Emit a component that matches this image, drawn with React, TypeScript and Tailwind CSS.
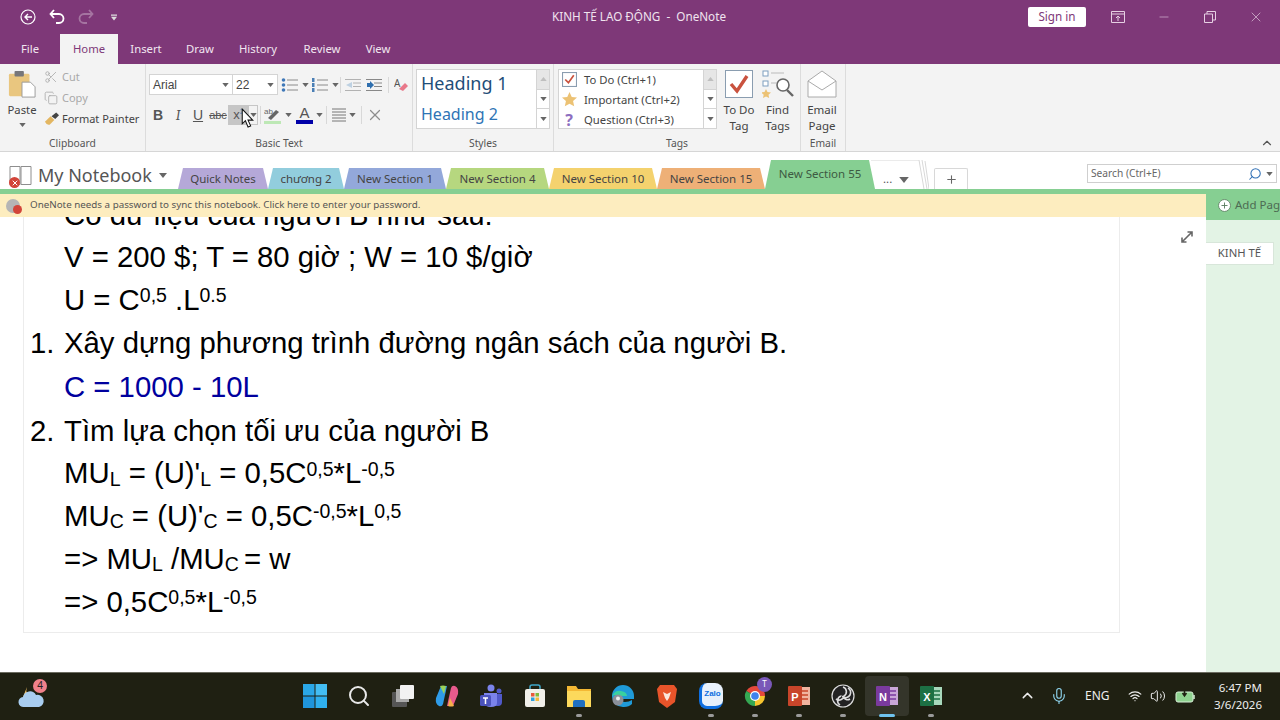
import { ChevronUp, Copy, Scissors, Search, Mic, Wifi, Volume2, X, Minus, Plus } from 'lucide-react';
import type { ReactNode } from 'react';

const sections = [
  { name: 'Quick Notes', w: 'w-[90px]', bg: 'bg-[#b5a8d8]' },
  { name: 'chương 2', w: 'w-[76px]', bg: 'bg-[#92cddd]' },
  { name: 'New Section 1', w: 'w-[102px]', bg: 'bg-[#93a8da]' },
  { name: 'New Section 4', w: 'w-[103px]', bg: 'bg-[#b6d77f]' },
  { name: 'New Section 10', w: 'w-[108px]', bg: 'bg-[#f4d26e]' },
  { name: 'New Section 15', w: 'w-[108px]', bg: 'bg-[#eeb077]' },
];

function Caret({ className = '' }: { className?: string }) {
  return (
    <svg viewBox="0 0 8 5" className={`w-[7px] h-[4px] shrink-0 ${className}`}>
      <path d="M0 0h8L4 5z" fill="#666" />
    </svg>
  );
}

function Group({ label, w, children }: { label: string; w: string; children: ReactNode }) {
  return (
    <div className={`${w} shrink-0 h-full flex flex-col border-r border-[#dcdcdc]`}>
      <div className="flex-1 min-h-0">{children}</div>
      <div className="h-[16px] pt-[2px] flex items-center justify-center text-[10.3px] text-[#555]">{label}</div>
    </div>
  );
}

function ScrollButtons() {
  return (
    <div className="w-[13px] h-[60px] flex flex-col border border-l-0 border-[#d4d4d4] bg-white">
      <div className="flex-1 bg-[#e6e6e6] flex items-center justify-center"><Caret className="rotate-180 opacity-30" /></div>
      <div className="flex-1 border-y border-[#d4d4d4] flex items-center justify-center"><Caret /></div>
      <div className="flex-1 flex items-center justify-center"><Caret /></div>
    </div>
  );
}

function ListIcon({ numbered = false }: { numbered?: boolean }) {
  return (
    <svg viewBox="0 0 18 16" className="w-[18px] h-[16px]">
      {[3, 8, 13].map((y) => (
        <g key={y}>
          {numbered ? (
            <rect x="1" y={y - 2} width="2.5" height="4" fill="#4a7fb5" />
          ) : (
            <circle cx="2.5" cy={y} r="1.8" fill="#3f78b8" />
          )}
          <path d={`M6 ${y}h11`} stroke="#8a8a8a" strokeWidth="1" />
        </g>
      ))}
    </svg>
  );
}

function IndentIcon({ color, dim = false }: { color: string; dim?: boolean }) {
  return (
    <svg viewBox="0 0 16 14" className={`w-[16px] h-[14px] ${dim ? 'opacity-60' : ''}`}>
      <path d="M0 1.5h16M8 5h8M8 8.5h8M0 12.5h16" stroke="#888" strokeWidth="1" />
      <path d={dim ? 'M7 4v6L1 7z' : 'M1 5h3V3l4 4-4 4V9H1z'} fill={color} />
    </svg>
  );
}

function Clipboard() {
  return (
    <div className="flex h-full">
      <div className="w-[44px] pt-[5px] flex flex-col items-center">
        <svg viewBox="0 0 30 30" className="w-[28px] h-[30px]">
          <rect x="1" y="4" width="22" height="24" rx="1.5" fill="#e9c67f" />
          <rect x="7" y="1" width="10" height="6" rx="1" fill="#77777a" />
          <path d="M15 13h9l5 5v11H15z" fill="#fff" stroke="#9a9a9a" strokeWidth="1" />
        </svg>
        <span className="text-[11.3px] leading-[16px] mt-[3px] text-[#444]">Paste</span>
        <Caret className="mt-[5px]" />
      </div>
      <div className="flex flex-col pt-[2px] text-[11px] leading-[21px]">
        <div className="flex items-center gap-[4px] text-[#a9a9a9]"><Scissors size={14} strokeWidth={1.4} />Cut</div>
        <div className="flex items-center gap-[4px] text-[#a9a9a9]"><Copy size={14} strokeWidth={1.4} />Copy</div>
        <div className="flex items-center gap-[3px] text-[#444] whitespace-nowrap">
          <svg viewBox="0 0 16 14" className="w-[15px] h-[14px]">
            <path d="M1 10l6-6 4 4-5 5q-3 1-5-3z" fill="#e3b661" />
            <path d="M8 4l5-4 3 3-4 4z" fill="#444" />
          </svg>
          Format Painter
        </div>
      </div>
    </div>
  );
}

function BasicText() {
  return (
    <div className="pl-[3px] pt-[10px]">
      <div className="flex items-center h-[21px]">
        <div className="w-[84px] h-[21px] bg-white border border-[#d4d4d4] flex items-center justify-between px-[3px] text-[12px] text-[#444] [font-family:'Liberation_Sans',sans-serif]">
          Arial<Caret />
        </div>
        <div className="w-[45px] h-[21px] bg-white border border-l-0 border-[#d4d4d4] flex items-center justify-between pl-[3px] pr-[3px] text-[12px] text-[#444] [font-family:'Liberation_Sans',sans-serif]">
          22<Caret />
        </div>
        <div className="flex items-center ml-[3px] gap-[3px]"><ListIcon /><Caret /></div>
        <div className="flex items-center ml-[2px] gap-[3px]"><ListIcon numbered /><Caret /></div>
        <div className="w-px h-[16px] bg-[#d8d8d8] ml-[1px]" />
        <div className="flex items-center ml-[4px] gap-[5px]"><IndentIcon color="#9bbcd8" dim /><IndentIcon color="#2f6fae" /></div>
        <div className="w-px h-[16px] bg-[#d8d8d8] ml-[6px]" />
        <svg viewBox="0 0 14 14" className="w-[14px] h-[14px] ml-[5px]">
          <text x="0" y="9" fontSize="10" fill="#555">A</text>
          <path d="M5 11l6-6 3 3-5 5z" fill="#e8788a" />
        </svg>
      </div>
      <div className="flex items-center h-[22px] mt-[9px] -ml-px text-[#555] [font-family:'Liberation_Sans',sans-serif]">
        <span className="w-[20px] text-center text-[14px] font-bold">B</span>
        <span className="w-[20px] text-center text-[14px] italic font-serif">I</span>
        <span className="w-[20px] text-center text-[14px] underline">U</span>
        <span className="w-[20px] text-center text-[11px] line-through">abc</span>
        <div className="relative flex items-center">
          <div className="w-[21px] h-[20px] bg-[#c6c6c6] flex items-center justify-center text-[13px]">
            x<sup className="text-[7px] text-[#5b8bb8]">2</sup>
          </div>
          <div className="w-[9px] h-[20px] border border-l-0 border-[#c6c6c6] flex items-center justify-center"><Caret /></div>
          <svg viewBox="0 0 12 19" className="absolute left-[13px] top-[3px] w-[13px] h-[20px]">
            <path d="M1 1v14l3-3 2.5 6 2.5-1-2.5-5.5H11z" fill="#fff" stroke="#111" strokeWidth="1" />
          </svg>
        </div>
        <div className="w-px h-[18px] bg-[#d8d8d8] ml-[2px]" />
        <div className="flex items-center ml-[3px] gap-[3px]">
          <svg viewBox="0 0 18 18" className="w-[18px] h-[18px]">
            <text x="0" y="8" fontSize="8" fill="#666">ab</text>
            <path d="M4 12l8-8 3 2-8 8z" fill="#666" />
            <rect x="0" y="15" width="17" height="3" fill="#bde8b5" />
          </svg>
          <Caret />
        </div>
        <div className="flex items-center ml-[4px] gap-[3px]">
          <div className="w-[17px] flex flex-col items-center">
            <span className="text-[15px] leading-[14px] text-[#555]">A</span>
            <div className="w-[17px] h-[4px] bg-[#0000a8]" />
          </div>
          <Caret />
        </div>
        <div className="w-px h-[18px] bg-[#d8d8d8] ml-[3px]" />
        <div className="flex items-center ml-[5px] gap-[3px]">
          <svg viewBox="0 0 14 14" className="w-[14px] h-[14px]">
            <path d="M0 1h14M0 4h14M0 7h14M0 10h14M0 13h14" stroke="#777" strokeWidth="1" />
          </svg>
          <Caret />
        </div>
        <div className="w-px h-[18px] bg-[#d8d8d8] ml-[5px]" />
        <X size={18} strokeWidth={1.6} className="ml-[4px] text-[#8d8d8d]" />
      </div>
    </div>
  );
}

function Styles() {
  return (
    <div className="flex pt-[5px] pl-[3px]">
      <div className="w-[121px] h-[60px] bg-white border border-[#d4d4d4] pl-[4px] flex flex-col">
        <span className="text-[18px] leading-[27px] text-[#1f4e79]">Heading 1</span>
        <span className="text-[16px] leading-[34px] text-[#2e74b5]">Heading 2</span>
      </div>
      <ScrollButtons />
    </div>
  );
}

function Tags() {
  return (
    <div className="flex pt-[5px] pl-[4px]">
      <div className="w-[146px] h-[60px] pt-px bg-white border border-[#d4d4d4] flex flex-col justify-center text-[11.3px] leading-[20px] text-[#444]">
        <div className="flex items-center">
          <div className="w-[25px] pr-[5px] flex justify-center">
            <svg viewBox="0 0 14 14" className="w-[15px] h-[15px]">
              <rect x="0.5" y="0.5" width="13" height="13" fill="#fff" stroke="#8a9db0" />
              <path d="M3 7l3 3 5-7" stroke="#c9523e" strokeWidth="1.6" fill="none" />
            </svg>
          </div>
          To Do (Ctrl+1)
        </div>
        <div className="flex items-center">
          <div className="w-[25px] pr-[5px] flex justify-center">
            <svg viewBox="0 0 16 16" className="w-[15px] h-[15px]">
              <path d="M8 0l2.4 5.2 5.6.6-4.2 3.8 1.2 5.6L8 12.4 3 15.2l1.2-5.6L0 5.8l5.6-.6z" fill="#ecc274" />
            </svg>
          </div>
          Important (Ctrl+2)
        </div>
        <div className="flex items-center">
          <span className="w-[25px] pr-[5px] text-center text-[16px] font-bold text-[#8d6fc0]">?</span>
          Question (Ctrl+3)
        </div>
      </div>
      <ScrollButtons />
      <div className="w-[44px] pt-px flex flex-col items-center text-[11.5px] leading-[16px] text-[#444] text-center">
        <svg viewBox="0 0 28 28" className="w-[28px] h-[28px] mb-[4px]">
          <rect x="0.5" y="0.5" width="27" height="27" fill="#fff" stroke="#8a9db0" />
          <path d="M6 14l6 7 10-15" stroke="#c9523e" strokeWidth="3.4" fill="none" />
        </svg>
        To Do<br />Tag
      </div>
      <div className="w-[33px] pt-px flex flex-col items-center text-[11.5px] leading-[16px] text-[#444] text-center">
        <svg viewBox="0 0 32 28" className="w-[32px] h-[28px] mb-[4px] shrink-0">
          <rect x="1" y="1" width="5" height="5" fill="#fff" stroke="#7f9fc0" />
          <rect x="1" y="11" width="5" height="5" fill="#fff" stroke="#7f9fc0" />
          <path d="M9 3h13M9 13h6" stroke="#bbb" />
          <path d="M4 19l1.5 3 3.5.4-2.5 2.3.7 3.3L4 26.4 1 28l.7-3.3L-1 22.4l3.5-.4z" fill="#ecc274" />
          <circle cx="21" cy="15" r="6" fill="#fff" stroke="#666" strokeWidth="1.6" />
          <path d="M25 20l6 6" stroke="#666" strokeWidth="2.4" />
        </svg>
        Find<br />Tags
      </div>
    </div>
  );
}

function Email() {
  return (
    <div className="pt-[6px] pr-[2px] flex flex-col items-center text-[11.5px] leading-[16px] text-[#444] text-center">
      <svg viewBox="0 0 30 28" className="w-[30px] h-[28px] mb-[4px]">
        <path d="M1 11L15 1l14 10v16H1z" fill="#fff" stroke="#aaa" />
        <path d="M1 11l14 9 14-9" fill="none" stroke="#aaa" />
      </svg>
      Email<br />Page
    </div>
  );
}

function Ribbon() {
  return (
    <div className="h-[88px] shrink-0 bg-[#f3f3f3] border-b border-[#d6d6d6] flex">
      <Group label="Clipboard" w="w-[146px]"><Clipboard /></Group>
      <Group label="Basic Text" w="w-[267px]"><BasicText /></Group>
      <Group label="Styles" w="w-[141px]"><Styles /></Group>
      <Group label="Tags" w="w-[247px]"><Tags /></Group>
      <Group label="Email" w="w-[45px]"><Email /></Group>
      <div className="flex-1 flex items-end justify-end pr-[6px] pb-px">
        <ChevronUp size={14} className="text-[#555]" />
      </div>
    </div>
  );
}

function TitleBar() {
  return (
    <div className="h-[34px] flex items-center relative text-white">
      <div className="flex items-center ml-[20px] gap-[13px]">
        <svg viewBox="0 0 16 16" className="w-[16px] h-[16px]">
          <circle cx="8" cy="8" r="7" fill="none" stroke="#fff" strokeWidth="1.2" />
          <path d="M12 8H5M8 5L5 8l3 3" fill="none" stroke="#fff" strokeWidth="1.4" />
        </svg>
        <svg viewBox="0 0 16 16" className="w-[16px] h-[16px]">
          <path d="M5 1L1.5 5 5 9M2 5h8a4.5 4.5 0 0 1 0 9H7" fill="none" stroke="#fff" strokeWidth="1.8" />
        </svg>
        <svg viewBox="0 0 16 16" className="w-[16px] h-[16px] opacity-30">
          <path d="M11 1l3.5 4L11 9M14 5H6a4.5 4.5 0 0 0 0 9h3" fill="none" stroke="#fff" strokeWidth="1.8" />
        </svg>
        <svg viewBox="0 0 8 8" className="w-[6px] h-[7px] ml-[4px]">
          <path d="M0 0h8v1.5H0zM0 3h8L4 8z" fill="#ddd" />
        </svg>
      </div>
      <div className="absolute left-0 right-0 text-center text-[11.7px] text-[#f0e4ef] pr-[2px]">KINH TẾ LAO ĐỘNG&nbsp; -&nbsp; OneNote</div>
      <div className="ml-auto flex items-center relative">
        <div className="w-[58px] h-[20px] mr-[9px] bg-white rounded-[2px] text-[#7e3878] text-[11.7px] flex items-center justify-center">Sign in</div>
        <div className="w-[46px] flex justify-center">
          <svg viewBox="0 0 14 12" className="w-[14px] h-[12px]">
            <path d="M.5.5h13v11H.5zM.5 3h13M7 10V5M5 7l2-2 2 2" fill="none" stroke="#e6cfe3" />
          </svg>
        </div>
        <div className="w-[46px] flex justify-center"><Minus size={14} strokeWidth={1} className="text-[#e6cfe3]" /></div>
        <div className="w-[46px] flex justify-center">
          <svg viewBox="0 0 12 12" className="w-[12px] h-[12px]">
            <path d="M.5 3h8v8.5h-8zM3 3V.5h8.5V9H9" fill="none" stroke="#e6cfe3" />
          </svg>
        </div>
        <div className="w-[46px] flex justify-center mr-px"><X size={16} strokeWidth={1} className="text-[#e6cfe3]" /></div>
      </div>
    </div>
  );
}

function MenuRow() {
  const items = [
    { t: 'File', w: 'w-[60px]' },
    { t: 'Home', w: 'w-[58px]', active: true },
    { t: 'Insert', w: 'w-[56px]' },
    { t: 'Draw', w: 'w-[52px]' },
    { t: 'History', w: 'w-[64px]' },
    { t: 'Review', w: 'w-[64px]' },
    { t: 'View', w: 'w-[48px]' },
  ];
  return (
    <div className="h-[30px] flex text-[11.3px]">
      {items.map((i) => (
        <div
          key={i.t}
          className={`${i.w} flex items-center justify-center ${i.active ? 'bg-[#f3f3f3] text-[#7e3878]' : 'text-[#f1e6f0]'}`}>
          {i.t}
        </div>
      ))}
    </div>
  );
}

function SectionRow() {
  return (
    <div className="h-[37px] shrink-0 bg-white flex items-end text-[11.5px]">
      <div className="w-[178px] h-[37px] shrink-0 flex items-center pt-[10px] pl-[9px] relative">
        <svg viewBox="0 0 24 20" className="w-[24px] h-[21px]">
          <path d="M1 1h10v18H1zM12 1h10v18H12z" fill="#fff" stroke="#8e8e8e" />
        </svg>
        <div className="absolute left-[9px] top-[25px] w-[11px] h-[11px] rounded-full bg-[#d2453a] text-white flex items-center justify-center">
          <X size={8} strokeWidth={3} />
        </div>
        <span className="ml-[5px] text-[18px] text-[#555] whitespace-nowrap">My Notebook</span>
        <Caret className="ml-[6px] !w-[10px] !h-[5px]" />
      </div>
      {sections.map((s) => (
        <div
          key={s.name}
          className={`${s.w} h-[21px] shrink-0 ${s.bg} flex items-center justify-center text-[#444] [clip-path:polygon(5px_0,calc(100%-5px)_0,100%_100%,0_100%)]`}>
          {s.name}
        </div>
      ))}
      <div className="w-[110px] h-[29px] shrink-0 bg-[#86cf92] pb-[2px] flex items-center justify-center text-[#3d5a42] [clip-path:polygon(6px_0,calc(100%-6px)_0,100%_100%,0_100%)]">
        New Section 55
      </div>
      <div className="w-[58px] h-[29px] shrink-0 -ml-[4px] flex items-end relative">
        <svg viewBox="0 0 58 29" className="absolute inset-0 w-[58px] h-[29px]">
          <path d="M0 0H48L53 29M51 0L56 29M54 1L58 29" fill="none" stroke="#d8d8d8" />
        </svg>
        <span className="ml-[12px] mb-[3px] text-[#555] leading-[14px]">...</span>
        <Caret className="ml-[7px] mb-[6px] !w-[10px] !h-[6px]" />
      </div>
      <div className="w-[34px] h-[21px] ml-[5px] shrink-0 border-t border-x border-[#d8d8d8] rounded-t-[2px] flex items-center justify-center">
        <Plus size={13} strokeWidth={2} className="text-[#666]" />
      </div>
      <div className="ml-[119px] mb-[6px] w-[190px] h-[19px] border border-[#cfcfcf] flex items-center justify-between px-[3px] text-[10.2px] text-[#666] shrink-0">
        Search (Ctrl+E)
        <div className="flex items-center gap-[4px]">
          <Search size={14} strokeWidth={1.8} className="text-[#2f6fb5] -scale-x-100" />
          <Caret />
        </div>
      </div>
    </div>
  );
}

function Line({ num, h, blue, children }: { num?: string; h: string; blue?: boolean; children: ReactNode }) {
  return (
    <div className={`${h} shrink-0 flex items-center whitespace-nowrap ${blue ? 'text-[#00009e]' : 'text-black'}`}>
      <span className="w-[40px] pl-[6px] shrink-0">{num}</span>
      <span>{children}</span>
    </div>
  );
}

function Sup({ children }: { children: ReactNode }) {
  return <sup className="text-[19.5px] top-[-0.38em]">{children}</sup>;
}

function Sub({ children }: { children: ReactNode }) {
  return <sub className="text-[19.5px] bottom-[-0.15em]">{children}</sub>;
}

function Page() {
  return (
    <div className="w-[1097px] ml-[23px] h-[416px] shrink-0 border-x border-b border-[#ececec] overflow-hidden flex flex-col text-[29.33px] [font-family:'Liberation_Sans',Arial,sans-serif]">
      <div className="-mt-[24px] flex flex-col">
        <Line h="h-[43px]">Có dữ liệu của người B như sau:</Line>
        <Line h="h-[41px]">V = 200 $; T = 80 giờ ; W = 10 $/giờ</Line>
        <Line h="h-[45px]">U = C<Sup>0,5</Sup> .L<Sup>0.5</Sup></Line>
        <Line num="1." h="h-[42px]">Xây dựng phương trình đường ngân sách của người B.</Line>
        <Line blue h="h-[45px]">C = 1000 - 10L</Line>
        <Line num="2." h="h-[43px]">Tìm lựa chọn tối ưu của người B</Line>
        <Line h="h-[42px]">MU<Sub>L</Sub> = (U)'<Sub>L</Sub> = 0,5C<Sup>0,5</Sup>*L<Sup>-0,5</Sup></Line>
        <Line h="h-[43px]">MU<Sub>C</Sub> = (U)'<Sub>C</Sub> = 0,5C<Sup>-0,5</Sup>*L<Sup>0,5</Sup></Line>
        <Line h="h-[43px]">=&gt; MU<Sub>L</Sub> /MU<Sub>C</Sub><span className="-ml-[3px]"> = w</span></Line>
        <Line h="h-[43px]">=&gt; 0,5C<Sup>0,5</Sup>*L<Sup>-0,5</Sup></Line>
      </div>
    </div>
  );
}

function NotebookBody() {
  return (
    <div className="flex-1 min-h-0 flex">
      <div className="w-[1206px] shrink-0 flex flex-col">
        <div className="h-[5px] bg-[#86cf92]" />
        <div className="h-[23px] bg-[#fdedbf] flex items-center text-[9.8px] text-[#555]">
          <div className="w-[26px] mr-[4px] flex justify-center">
            <div className="relative w-[14px] h-[14px] rounded-full bg-[#b5b5b5]">
              <div className="absolute right-[-2px] bottom-[-1px] w-[9px] h-[9px] rounded-full bg-[#d2453a]" />
            </div>
          </div>
          OneNote needs a password to sync this notebook. Click here to enter your password.
        </div>
        <div className="flex-1 min-h-0 flex bg-white">
          <Page />
          <div className="flex-1 pt-[14px] pl-[61px]">
            <svg viewBox="0 0 12 12" className="w-[12px] h-[12px]">
              <path d="M1 11L11 1M6.5 1H11v4.5M5.5 11H1V6.5" fill="none" stroke="#666" strokeWidth="1.6" />
            </svg>
          </div>
        </div>
      </div>
      <div className="flex-1 flex flex-col bg-[#e3f3e5]">
        <div className="h-[31px] bg-[#86cf92] pt-px flex items-center pl-[12px] gap-[4px] text-[11.5px] text-[#4d6b52] whitespace-nowrap overflow-hidden">
          <div className="w-[13px] h-[13px] shrink-0 rounded-full bg-white border border-[#6a8f70] flex items-center justify-center"><Plus size={9} strokeWidth={2.5} className="text-[#5c7e62]" /></div>
          Add Page
        </div>
        <div className="mt-[22px] w-[68px] h-[23px] bg-white border-y border-r border-[#d8e6da] flex items-center justify-center text-[11.3px] text-[#555]">KINH TẾ</div>
      </div>
    </div>
  );
}

function TrayApp({ dot, active, children }: { dot?: boolean; active?: boolean; children: ReactNode }) {
  return (
    <div className={`w-[44px] h-[40px] shrink-0 relative flex items-center justify-center rounded-[4px] ${active ? 'bg-[#34352a]' : ''}`}>
      {children}
      {dot && !active && <div className="absolute bottom-[-1px] left-[19px] w-[6px] h-[3px] rounded-full bg-[#9a9a9a]" />}
      {active && <div className="absolute bottom-[-1px] left-[14px] w-[16px] h-[3px] rounded-full bg-[#6fc3ef]" />}
    </div>
  );
}

function OfficeIcon({ letter, bg, light }: { letter: string; bg: string; light: string }) {
  return (
    <svg viewBox="0 0 24 24" className="w-[24px] h-[24px]">
      <rect x="7" y="3" width="16" height="18" fill={light} />
      <path d="M14 7h7M14 11h7M14 15h7" stroke={bg} strokeWidth="1.4" />
      <rect x="1" y="2" width="14" height="20" rx="1" fill={bg} />
      <text x="8" y="16.5" fontSize="11" fontWeight="700" fill="#fff" textAnchor="middle" fontFamily="Liberation Sans">{letter}</text>
    </svg>
  );
}

function Taskbar() {
  return (
    <div className="h-[48px] shrink-0 bg-[#1f2012] border-t border-[#6b6b60] pb-[2px] flex items-center text-[#eee]">
      <div className="w-[293px] shrink-0 pl-[18px] relative">
        <svg viewBox="0 0 28 26" className="w-[28px] h-[26px]">
          <path d="M9 4a8 8 0 0 0 6 11L5 14z" fill="#f3c267" />
          <path d="M6 24a5 5 0 0 1-1-10 7 7 0 0 1 13-2 6 6 0 0 1 3 12z" fill="#a9cdf0" />
        </svg>
        <div className="absolute left-[33px] top-[-4px] w-[14px] h-[14px] rounded-full bg-[#f0808a] text-[#222] text-[10px] flex items-center justify-center">4</div>
      </div>
      <TrayApp>
        <svg viewBox="0 0 24 24" className="w-[24px] h-[24px]">
          <path d="M0 0h11.5v11.5H0z" fill="#2aa7e8" />
          <path d="M12.5 0H24v11.5H12.5z" fill="#43bdf3" />
          <path d="M0 12.5h11.5V24H0z" fill="#1f95dc" />
          <path d="M12.5 12.5H24V24H12.5z" fill="#2fb0ef" />
        </svg>
      </TrayApp>
      <TrayApp><Search size={24} strokeWidth={2} className="text-[#e8e8e8]" /></TrayApp>
      <TrayApp>
        <svg viewBox="0 0 24 24" className="w-[24px] h-[24px]">
          <rect x="1" y="8" width="15" height="15" rx="1" fill="#555" />
          <rect x="5" y="5" width="13" height="13" fill="#aaa" />
          <rect x="9" y="1" width="14" height="14" rx="1" fill="#f2f2f2" />
        </svg>
      </TrayApp>
      <TrayApp>
        <svg viewBox="0 0 24 24" className="w-[24px] h-[24px]">
          <path d="M6 2h6L8 20q-1 3-4 2-4-2-3-8z" fill="#2f9ce8" />
          <path d="M5 2q3-1 6 0L9 10z" fill="#9dd25a" />
          <path d="M18 22h-6l4-18q1-3 4-2 4 2 3 8z" fill="#e85a8c" />
          <path d="M19 22q-3 1-6 0l2-8z" fill="#f5b04a" />
        </svg>
      </TrayApp>
      <TrayApp>
        <svg viewBox="0 0 24 24" className="w-[24px] h-[24px]">
          <circle cx="12" cy="4" r="3.5" fill="#7b83eb" />
          <circle cx="20" cy="7" r="2.5" fill="#5059c9" />
          <path d="M15 10h8v8q0 4-4 4h-4z" fill="#5059c9" />
          <path d="M5 9h13v10q0 4-6 4t-7-4z" fill="#7b83eb" />
          <rect x="1" y="11" width="11" height="11" rx="1.5" fill="#4b53bc" />
          <path d="M4 14h5M6.5 14v6" stroke="#fff" strokeWidth="1.5" />
        </svg>
      </TrayApp>
      <TrayApp>
        <svg viewBox="0 0 24 24" className="w-[24px] h-[24px]">
          <path d="M7 6V3q0-2 2-2h6q2 0 2 2v3" fill="none" stroke="#3fa7c9" strokeWidth="1.5" />
          <rect x="2" y="5" width="20" height="18" rx="2" fill="#f0efe9" />
          <path d="M8 9h3.5v3.5H8z" fill="#e8583c" />
          <path d="M12.5 9H16v3.5h-3.5z" fill="#7fba3c" />
          <path d="M8 13.5h3.5V17H8z" fill="#2d9fe0" />
          <path d="M12.5 13.5H16V17h-3.5z" fill="#f5b93c" />
        </svg>
      </TrayApp>
      <TrayApp dot>
        <svg viewBox="0 0 24 24" className="w-[24px] h-[24px]">
          <path d="M0 2h9l2 3h13v18H0z" fill="#f4b834" />
          <path d="M0 7h24v16H0z" fill="#fcd95c" />
          <path d="M6 23v-5q0-2 2-2h8q2 0 2 2v5z" fill="#1f6fc0" />
        </svg>
      </TrayApp>
      <TrayApp>
        <svg viewBox="0 0 24 24" className="w-[24px] h-[24px]">
          <path d="M1 12a11 11 0 0 1 22 0v3H9q1 3 5 3 4 0 7-2v4q-3 3-8 3A11 11 0 0 1 1 12z" fill="#1f9ad8" />
          <path d="M1 12q3-6 9-5t6 5H9q-5-2-8 0z" fill="#39d0a0" />
          <circle cx="7" cy="16" r="5.5" fill="#8a8f99" />
          <circle cx="7" cy="14.5" r="2" fill="#eee" />
        </svg>
      </TrayApp>
      <TrayApp>
        <svg viewBox="0 0 24 24" className="w-[24px] h-[24px]">
          <path d="M5 1h14l3 4-2 13-8 6-8-6L2 5z" fill="#e8542a" />
          <path d="M8 8l4 2 4-2-2 6-2 3-2-3z" fill="#fbe6dc" />
        </svg>
      </TrayApp>
      <TrayApp dot>
        <div className="w-[24px] h-[26px] rounded-[8px] bg-[#e8f1fb] border-l-[3px] border-b-[3px] border-[#0f6fe0] flex items-center justify-center text-[8px] font-bold text-[#0f6fe0] [font-family:'Liberation_Sans',sans-serif]">Zalo</div>
      </TrayApp>
      <TrayApp dot>
        <div className="relative">
          <svg viewBox="0 0 24 24" className="w-[24px] h-[24px]">
            <path d="M12 12L3.3 7A10 10 0 0 1 22 12z" fill="#e5483b" />
            <path d="M12 12L3.3 7A10 10 0 0 0 12 22z" fill="#35a853" />
            <path d="M12 12h10A10 10 0 0 1 12 22z" fill="#f7c52e" />
            <circle cx="12" cy="12" r="5" fill="#fff" />
            <circle cx="12" cy="12" r="3.8" fill="#3f83ee" />
          </svg>
          <div className="absolute right-[-5px] top-[-7px] w-[15px] h-[15px] rounded-full bg-[#7a58b8] text-white text-[8px] flex items-center justify-center">T</div>
        </div>
      </TrayApp>
      <TrayApp dot><OfficeIcon letter="P" bg="#c8452a" light="#f0b49f" /></TrayApp>
      <TrayApp dot>
        <svg viewBox="0 0 24 24" className="w-[24px] h-[24px]">
          <circle cx="12" cy="12" r="11" fill="#222" stroke="#ddd" strokeWidth="1.2" />
          <path d="M12 3a5 5 0 0 1 1 9 5 5 0 0 1-8 3M19 15a5 5 0 0 1-7-2 5 5 0 0 0 5-9M9 21a5 5 0 0 1 1-9" fill="none" stroke="#ddd" strokeWidth="1.6" />
        </svg>
      </TrayApp>
      <TrayApp active><OfficeIcon letter="N" bg="#7a3a9e" light="#c9a6d8" /></TrayApp>
      <TrayApp dot><OfficeIcon letter="X" bg="#1d7044" light="#a8d8bc" /></TrayApp>
      <div className="w-[66px] shrink-0" />
      <ChevronUp size={17} strokeWidth={2} className="shrink-0" />
      <Mic size={18} strokeWidth={1.5} className="ml-[14px] shrink-0 text-[#8fd4ee]" />
      <span className="ml-[17px] text-[12px] w-[28px] shrink-0">ENG</span>
      <Wifi size={14} strokeWidth={2} className="ml-[15px] shrink-0" />
      <Volume2 size={16} strokeWidth={1.5} className="ml-[8px] shrink-0" />
      <svg viewBox="0 0 20 14" className="w-[20px] h-[14px] ml-[9px] shrink-0">
        <rect x="1" y="3" width="17" height="10" rx="2" fill="#8ed28f" stroke="#d8f0d8" />
        <path d="M19 6v4" stroke="#d8f0d8" strokeWidth="1.5" />
        <path d="M9.5 0v6M7.5 4l2 3 2-3" fill="none" stroke="#1f2012" strokeWidth="1.5" />
      </svg>
      <div className="ml-auto pr-[18px] flex flex-col items-end text-[11.5px] leading-[17px]">
        <span>6:47 PM</span>
        <span>3/6/2026</span>
      </div>
    </div>
  );
}

export default function App() {
  return (
    <div className="w-[1280px] h-[720px] overflow-hidden flex flex-col bg-white [font-family:'Noto_Sans',sans-serif]">
      <div className="shrink-0 bg-[#7e3878]">
        <TitleBar />
        <MenuRow />
      </div>
      <Ribbon />
      <SectionRow />
      <NotebookBody />
      <Taskbar />
    </div>
  );
}
